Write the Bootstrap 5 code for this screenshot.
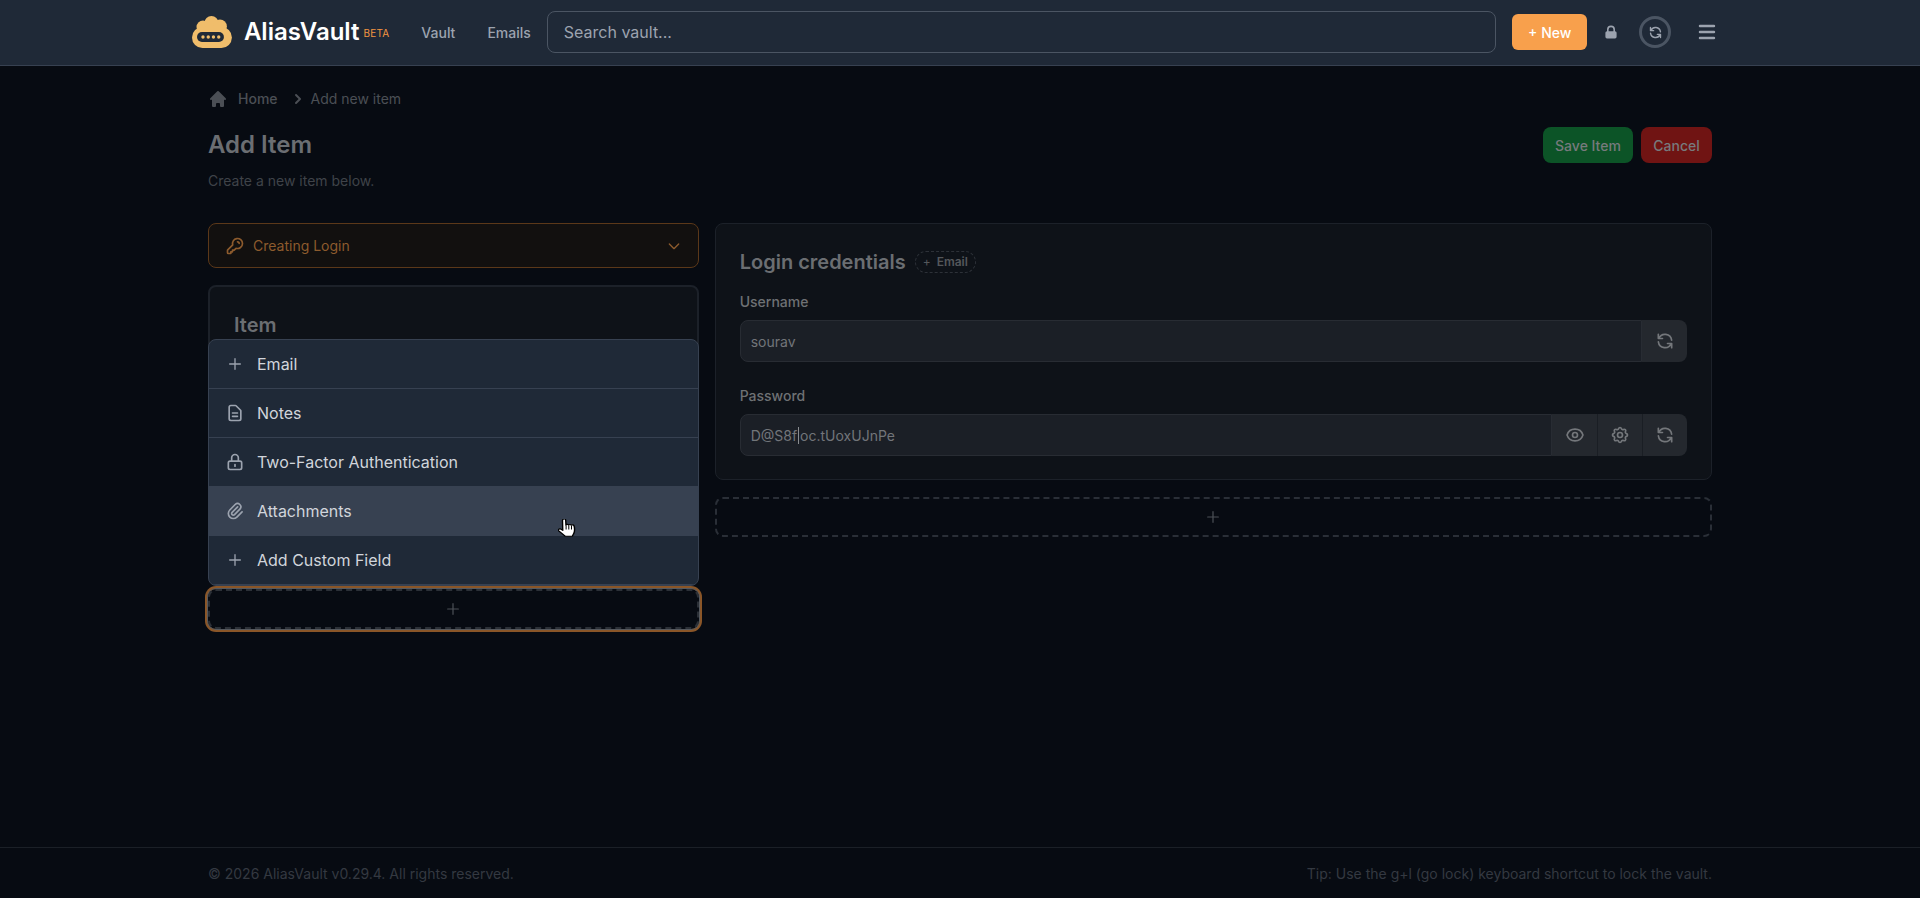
<!DOCTYPE html>
<html lang="en">

<head>
    <meta charset="UTF-8">
    <meta name="viewport" content="width=device-width, initial-scale=1">
    <title>AliasVault - Add Item</title>
    <link href="https://cdn.jsdelivr.net/npm/bootstrap@5.3.0/dist/css/bootstrap.min.css" rel="stylesheet">
    <style>
        body { font-family: Inter, "Liberation Sans", sans-serif; background: #070b12; font-size: 14px; min-height: 898px; overflow: hidden; }
        .ico { width: 16px; height: 16px; fill: none; stroke: currentColor; stroke-width: 2; stroke-linecap: round; stroke-linejoin: round; flex: none; }
        .ico-solid { fill: currentColor; stroke: none; }

        /* header */
        .top-bar { background: #1f2937; height: 66px; border-bottom: 1px solid #374151; }
        .top-inner { width: 1536px; margin: 0 auto; height: 64px; padding-right: 12px; }
        .brand-name { font-size: 24px; font-weight: 600; color: #fff; margin-left: 12px; }
        .brand-beta { font-size: 10px; color: #f49541; margin-left: 4px; margin-top: 3px; letter-spacing: 0.2px; }
        .top-link { color: #9ca3af; font-weight: 500; font-size: 14px; text-decoration: none; }
        .top-search { width: 952px; height: 42px; margin-left: 16px; background: #1f2937; border: 1px solid #4b5563; border-radius: 8px; color: #9ca3af; font-size: 16px; padding: 0 16px; }
        .top-search::placeholder { color: #9ca3af; opacity: 1; }
        .btn-new { width: 75px; height: 36px; margin-left: 16px; padding: 0; background: #f8a04c; color: #fff; font-size: 14px; font-weight: 500; border: 0; border-radius: 6px; }
        .sync-ring { width: 32px; height: 32px; border: 3px solid #4b5563; border-radius: 50%; color: #9ca3af; margin-left: 20px; }
        .sync-ring .ico { width: 15px; height: 15px; stroke-width: 2.2; }
        .menu-bars { margin-left: 27px; }

        /* page */
        .page-wrap { width: 1504px; margin: 0 auto; padding-top: 24px; height: 781px; }
        .crumbs { height: 17px; color: #4b4f55; font-size: 14px; }
        .crumb-home { font-weight: 500; margin-left: 10px; }
        .crumb-home-ico { width: 20px; height: 20px; }
        .crumb-sep { width: 20px; height: 20px; margin: 0 3px 0 10px; }
        .page-head { margin-top: 22px; }
        .page-actions { margin-top: -2px; height: 36px; }
        .page-title { font-size: 24px; font-weight: 600; color: #6b6e72; margin: 0; line-height: 32px; }
        .page-sub { color: #3f4349; margin: 0; line-height: 20px; margin-top: 10px; }
        .btn-save, .btn-cancel { height: 36px; padding: 0 12px; font-size: 14px; font-weight: 500; color: #777a7d; border: 0; border-radius: 8px; }
        .btn-save { background: #0c5427; width: 90px; }
        .btn-cancel { background: #701413; width: 71px; }
        .form-cols { display: grid; grid-template-columns: repeat(3, 1fr); column-gap: 16px; margin-top: 32px; }
        .col-wide { grid-column: span 2; }

        .type-select { height: 45px; background: #12100f; border: 1px solid #5b3819; border-radius: 8px; color: #8d5b2d; padding: 0 16px; margin-bottom: 17px; }
        .type-key { width: 20px; height: 20px; margin-right: 8px; }
        .panel { background: #0e1218; border: 1px solid #1c2129; border-radius: 8px; padding: 24px; }
        .panel-left { height: 288px; border-width: 2px; margin-bottom: 16px; }
        .panel-title { font-size: 20px; font-weight: 600; color: #6b6e72; line-height: 28px; margin: 0; }
        .panel-right { height: 257px; margin-bottom: 17px; }
        .panel-head { margin-bottom: 16px; }
        .pill-add { height: 22px; padding: 0 7px; gap: 6px; border: 1px dashed #2d3138; border-radius: 11px; color: #54575b; font-size: 12px; font-weight: 600; margin-left: 9px; }
        .pill-plus { font-weight: 400; }
        .field-label { color: #6e7174; font-weight: 500; font-size: 14px; line-height: 20px; margin-bottom: 8px; }
        .field-group { height: 42px; margin-bottom: 24px; }
        .field-box { height: 42px; background: #1b1f26; border: 1px solid #282c33; border-radius: 8px 0 0 8px; padding: 0 10px; color: #72757a; font-size: 14px; flex: 1; }
        .text-caret { width: 1px; height: 17px; background: #8a8d91; margin: 0 1px; }
        .field-btn { width: 45px; height: 42px; background: #24282e; color: #74777b; border: 0; border-left: 1px solid #1a1e24; padding: 0; border-radius: 0; }
        .field-box + .field-btn { border-left: 0; }
        .field-btn:last-child { border-radius: 0 8px 8px 0; }
        .field-btn .ico { width: 20px; height: 20px; }

        .add-slot { height: 40px; width: 100%; background: transparent; border: 2px dashed #2a2f37; border-radius: 8px; color: #4d5157; padding: 0; }
        .add-slot-focus { box-shadow: 0 0 0 1px #55595e, 0 0 0 3px #8a5628; border-color: #2b3037; }
        .add-slot .ico { stroke-width: 1.8; }

        /* menu over the item card */
        .add-menu { position: absolute; left: 0; right: 0; bottom: calc(100% + 3px); background: #1f2937; border: 1px solid #374151; border-radius: 8px; overflow: hidden; }
        .add-menu .list-group-item { background: transparent; color: #d1d5db; border: 0; border-bottom: 1px solid #374151; height: 49px; padding: 0 0 0 18px; gap: 14px; font-size: 16px; border-radius: 0; }
        .add-menu .list-group-item:last-child { border-bottom: 0; height: 47px; }
        .add-menu .list-group-item.is-hover { background: #374151; border-bottom-color: #374151; }
        .add-menu .ico { color: #9ca3af; }
        .add-menu .ico-big { width: 20px; height: 20px; margin: 0 -2px; }
        .hand-cursor { position: absolute; left: 349px; top: 179px; width: 18px; height: 18px; }

        /* footer */
        .foot-bar { height: 51px; border-top: 1px solid #1b2027; }
        .foot-inner { width: 1504px; margin: 0 auto; height: 50px; color: #343941; font-size: 14px; }
    </style>
</head>

<body>
    <svg width="0" height="0" class="position-absolute">
        <symbol id="i-plus" viewBox="0 0 24 24"><path d="M12 4v16m8-8H4"/></symbol>
        <symbol id="i-refresh" viewBox="0 0 24 24"><path d="M4 4v5h.582m15.356 2A8.001 8.001 0 004.582 9m0 0H9m11 11v-5h-.581m0 0a8.003 8.003 0 01-15.357-2m15.357 2H15"/></symbol>
    </svg>

    <!-- header -->
    <nav class="top-bar">
        <div class="top-inner d-flex align-items-center">
            <svg width="40" height="32" viewBox="0 0 40 32" fill="#f0bd6b">
                <circle cx="11" cy="11" r="6.500"/><circle cx="19.500" cy="7" r="7"/><circle cx="28" cy="10.500" r="7"/>
                <rect x="0" y="11" width="40" height="21" rx="10.500"/>
                <rect x="5" y="16" width="27" height="10" rx="5" fill="#1f2937"/>
                <circle cx="11" cy="21" r="1.700"/><circle cx="16.300" cy="21" r="1.700"/><circle cx="21.500" cy="21" r="1.700"/><circle cx="26.800" cy="21" r="1.700"/>
            </svg>
            <span class="brand-name">AliasVault</span>
            <span class="brand-beta">BETA</span>
            <a class="top-link ms-4 ps-2" href="#">Vault</a>
            <a class="top-link ms-4 ps-2" href="#">Emails</a>
            <input type="text" class="top-search" placeholder="Search vault...">
            <button type="button" class="btn btn-new">+ New</button>
            <svg class="ico ico-solid ms-3" viewBox="0 0 20 20" style="color:#9ca3af"><path d="M5 9V7a5 5 0 0110 0v2a2 2 0 012 2v5a2 2 0 01-2 2H5a2 2 0 01-2-2v-5a2 2 0 012-2zm8-2v2H7V7a3 3 0 016 0z" fill-rule="evenodd"/></svg>
            <div class="sync-ring d-flex align-items-center justify-content-center">
                <svg class="ico"><use href="#i-refresh"/></svg>
            </div>
            <svg class="menu-bars" width="18" height="16" viewBox="0 0 18 16"><path d="M2 2h14M2 8h14M2 14h14" stroke="#9ca3af" stroke-width="2.500" stroke-linecap="round"/></svg>
        </div>
    </nav>

    <main class="page-wrap">
        <div class="crumbs d-flex align-items-center">
            <svg class="ico ico-solid crumb-home-ico" viewBox="0 0 20 20"><path d="M10.707 2.293a1 1 0 00-1.414 0l-7 7a1 1 0 001.414 1.414L4 10.414V17a1 1 0 001 1h2a1 1 0 001-1v-2a1 1 0 011-1h2a1 1 0 011 1v2a1 1 0 001 1h2a1 1 0 001-1v-6.586l.293.293a1 1 0 001.414-1.414l-7-7z"/></svg>
            <span class="crumb-home">Home</span>
            <svg class="ico ico-solid crumb-sep" viewBox="0 0 20 20"><path d="M7.293 14.707a1 1 0 010-1.414L10.586 10 7.293 6.707a1 1 0 011.414-1.414l4 4a1 1 0 010 1.414l-4 4a1 1 0 01-1.414 0z"/></svg>
            <span>Add new item</span>
        </div>

        <div class="page-head d-flex justify-content-between">
            <div>
                <h1 class="page-title">Add Item</h1>
                <p class="page-sub">Create a new item below.</p>
            </div>
            <div class="page-actions d-flex gap-2">
                <button type="button" class="btn btn-save">Save Item</button>
                <button type="button" class="btn btn-cancel">Cancel</button>
            </div>
        </div>

        <div class="form-cols">
            <div>
                <div class="type-select d-flex align-items-center">
                    <svg class="ico type-key" viewBox="0 0 24 24"><path d="M15 7a2 2 0 012 2m4 0a6 6 0 01-7.743 5.743L11 17H9v2H7v2H4a1 1 0 01-1-1v-2.586a1 1 0 01.293-.707l5.964-5.964A6 6 0 1121 9z"/></svg>
                    <span>Creating Login</span>
                    <svg class="ico ms-auto" viewBox="0 0 24 24"><path d="M19 9l-7 7-7-7"/></svg>
                </div>
                <div class="panel panel-left">
                    <h2 class="panel-title">Item</h2>
                </div>
                <div class="position-relative">
                    <div class="add-menu list-group">
                        <div class="list-group-item d-flex align-items-center"><svg class="ico"><use href="#i-plus"/></svg>Email</div>
                        <div class="list-group-item d-flex align-items-center"><svg class="ico ico-big" viewBox="0 0 24 24"><path d="M9 12h6m-6 4h6m2 5H7a2 2 0 01-2-2V5a2 2 0 012-2h5.586a1 1 0 01.707.293l5.414 5.414a1 1 0 01.293.707V19a2 2 0 01-2 2z"/></svg>Notes</div>
                        <div class="list-group-item d-flex align-items-center"><svg class="ico ico-big" viewBox="0 0 24 24"><path d="M12 15v2m-6 4h12a2 2 0 002-2v-6a2 2 0 00-2-2H6a2 2 0 00-2 2v6a2 2 0 002 2zm10-10V7a4 4 0 00-8 0v4h8z"/></svg>Two-Factor Authentication</div>
                        <div class="list-group-item is-hover d-flex align-items-center"><svg class="ico ico-big" viewBox="0 0 24 24"><path d="M15.172 7l-6.586 6.586a2 2 0 102.828 2.828l6.414-6.586a4 4 0 00-5.656-5.656l-6.415 6.585a6 6 0 108.486 8.486L20.500 13"/></svg>Attachments</div>
                        <div class="list-group-item d-flex align-items-center"><svg class="ico"><use href="#i-plus"/></svg>Add Custom Field</div>
                        <svg class="hand-cursor" viewBox="1 1 14 17.500" preserveAspectRatio="none"><path d="M5 1.200c.8-.6 1.900-.1 2 1l.2 4.800c.1-.9 1.800-1 2.100 0 .2-.8 1.800-.9 2.100.1.300-.6 1.700-.6 2 .4.500 1.700.6 4 .3 6-.3 1.800-1 3-1.600 4.300H6.800L1.600 12.600c-.8-1 .2-2.300 1.400-1.800L4.700 12 4.500 2.500c0-.6.100-1 .5-1.300z" fill="#fff" stroke="#000" stroke-width="1.100" stroke-linejoin="round"/><path d="M7.300 7.200v4M9.400 7.300v4M11.500 7.500v3.700" stroke="#000" stroke-width=".8" fill="none"/></svg>
                    </div>
                    <button type="button" class="add-slot add-slot-focus d-flex align-items-center justify-content-center"><svg class="ico"><use href="#i-plus"/></svg></button>
                </div>
            </div>

            <div class="col-wide">
                <div class="panel panel-right">
                    <div class="panel-head d-flex align-items-center">
                        <h2 class="panel-title">Login credentials</h2>
                        <span class="pill-add d-flex align-items-center"><span class="pill-plus">+</span> Email</span>
                    </div>
                    <div class="field-label">Username</div>
                    <div class="field-group d-flex">
                        <div class="field-box d-flex align-items-center">sourav</div>
                        <button type="button" class="field-btn d-flex align-items-center justify-content-center"><svg class="ico"><use href="#i-refresh"/></svg></button>
                    </div>
                    <div class="field-label">Password</div>
                    <div class="field-group d-flex mb-0">
                        <div class="field-box d-flex align-items-center">D@S8f<span class="text-caret"></span>oc.tUoxUJnPe</div>
                        <button type="button" class="field-btn d-flex align-items-center justify-content-center"><svg class="ico" viewBox="0 0 24 24"><path d="M15 12a3 3 0 11-6 0 3 3 0 016 0z"/><path d="M2.458 12C3.732 7.943 7.523 5 12 5c4.478 0 8.268 2.943 9.542 7-1.274 4.057-5.064 7-9.542 7-4.477 0-8.268-2.943-9.542-7z"/></svg></button>
                        <button type="button" class="field-btn d-flex align-items-center justify-content-center"><svg class="ico" viewBox="0 0 24 24"><path d="M10.325 4.317c.426-1.756 2.924-1.756 3.350 0a1.724 1.724 0 002.573 1.066c1.543-.94 3.310.826 2.370 2.370a1.724 1.724 0 001.065 2.572c1.756.426 1.756 2.924 0 3.350a1.724 1.724 0 00-1.066 2.573c.94 1.543-.826 3.310-2.370 2.370a1.724 1.724 0 00-2.572 1.065c-.426 1.756-2.924 1.756-3.350 0a1.724 1.724 0 00-2.573-1.066c-1.543.94-3.310-.826-2.370-2.370a1.724 1.724 0 00-1.065-2.572c-1.756-.426-1.756-2.924 0-3.350a1.724 1.724 0 001.066-2.573c-.94-1.543.826-3.310 2.370-2.370.996.608 2.296.07 2.572-1.065z"/><path d="M15 12a3 3 0 11-6 0 3 3 0 016 0z"/></svg></button>
                        <button type="button" class="field-btn d-flex align-items-center justify-content-center"><svg class="ico"><use href="#i-refresh"/></svg></button>
                    </div>
                </div>
                <button type="button" class="add-slot d-flex align-items-center justify-content-center"><svg class="ico"><use href="#i-plus"/></svg></button>
            </div>
        </div>
    </main>

    <footer class="foot-bar">
        <div class="foot-inner d-flex align-items-center justify-content-between">
            <span>© 2026 AliasVault v0.29.4. All rights reserved.</span>
            <span>Tip: Use the g+l (go lock) keyboard shortcut to lock the vault.</span>
        </div>
    </footer>

    <script src="https://cdn.jsdelivr.net/npm/bootstrap@5.3.0/dist/js/bootstrap.bundle.min.js"></script>
</body>

</html>
